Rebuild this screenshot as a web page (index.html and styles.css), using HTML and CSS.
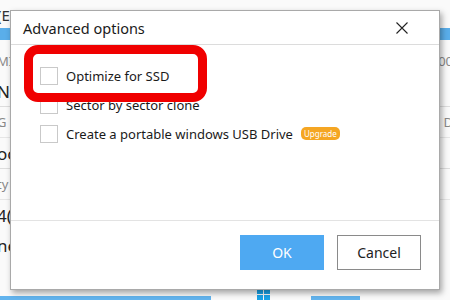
FILE: index.html
```html
<!DOCTYPE html>
<html lang="en">

<head>
    <meta charset="UTF-8">
    <title>Advanced options</title>
    <link rel="stylesheet" href="styles.css">
</head>

<body>
    <!-- app behind the dialog, mostly hidden -->
    <div class="app">
        <div class="row"><span class="left">(E</span><span class="right"></span></div>
        <div class="row sel"><span class="left"></span><span class="right"></span></div>
        <div class="row"><span class="left grey">MI</span><span class="right grey">00</span></div>
        <div class="row"><span class="left big">NI</span><span class="right"></span></div>
        <div class="row line"><span class="left grey">G</span><span class="right grey">D</span></div>
        <div class="row"><span class="left big">oc</span><span class="right"></span></div>
        <div class="row line"><span class="left grey">ty</span><span class="right"></span></div>
        <div class="row"><span class="left big">4(</span><span class="right"></span></div>
        <div class="row"><span class="left big">ne</span><span class="right"></span></div>
    </div>

    <div class="taskbar">
        <div class="task wide"></div>
        <div class="winlogo">
            <span></span><span></span><span></span><span></span>
        </div>
        <div class="task short"></div>
    </div>

    <div class="dialog">
        <div class="dialog-head">
            <span class="dialog-title">Advanced options</span>
            <svg class="close" width="12" height="12" viewBox="0 0 12 12">
                <path d="M0.5 0.5 L11.5 11.5 M11.5 0.5 L0.5 11.5" stroke="#222" stroke-width="1.1" fill="none"/>
            </svg>
        </div>

        <div class="dialog-body">
            <label class="option"><span class="box"></span>Optimize for SSD</label>
            <label class="option"><span class="box"></span>Sector by sector clone</label>
            <label class="option"><span class="box"></span>Create a portable windows USB Drive<span class="badge">Upgrade</span></label>
            <div class="highlight"></div>
        </div>

        <div class="dialog-foot">
            <button class="btn ok">OK</button>
            <button class="btn cancel">Cancel</button>
        </div>
    </div>
</body>

</html>
```

FILE: styles.css
```css
body {
    margin: 0;
    padding: 0;
    width: 450px;
    height: 300px;
    overflow: hidden;
    background-color: #fafafa;
    font-family: "Noto Sans", "Open Sans", sans-serif;
    color: #222;
    position: relative;
}

/* background app */
.row {
    height: 30px;
    display: flex;
    justify-content: space-between;
    align-items: center;
    font-size: 15px;
    color: #333;
}

.row.sel {
    height: 12px;
    background-color: #5aaeea;
    margin-top: -2px;
    margin-bottom: 6px;
}

.row.line {
    border-top: 1px solid #ddd;
    border-bottom: 1px solid #e6e6e6;
}

.left {
    margin-left: -3px;
}

.right {
    margin-right: -3px;
}

.grey {
    color: #888;
    font-size: 13px;
}

.big {
    font-size: 17px;
    color: #222;
}

.taskbar {
    position: absolute;
    left: 0;
    bottom: 0;
    width: 450px;
    height: 10px;
    display: flex;
    align-items: flex-end;
}

.task {
    height: 4px;
    background-color: #63b4ee;
}

.task.wide {
    width: 211px;
}

.task.short {
    width: 49px;
    margin-left: 40px;
}

.winlogo {
    width: 14px;
    height: 11px;
    margin-left: 46px;
    display: grid;
    grid-template-columns: 6px 6px;
    gap: 1px;
}

.winlogo span {
    background-color: #1aa3e8;
}

/* dialog */
.dialog {
    position: absolute;
    left: 10px;
    top: 10px;
    width: 428px;
    height: 278px;
    background-color: #fff;
    border: 1px solid #a9a9a9;
    box-shadow: 2px 3px 6px rgba(0, 0, 0, 0.35);
    display: flex;
    flex-direction: column;
}

.dialog-head {
    height: 33px;
    border-bottom: 1px solid #dcdcdc;
    display: flex;
    align-items: center;
    justify-content: space-between;
    padding: 0 31px 0 12px;
}

.dialog-title {
    font-size: 14.5px;
    color: #1a1a1a;
}

.dialog-body {
    flex: 1;
    position: relative;
    padding: 16px 0 0 29px;
    border-bottom: 1px solid #e3e3e3;
}

.option {
    display: flex;
    align-items: center;
    height: 29px;
    font-size: 13px;
    color: #1a1a1a;
}

.box {
    width: 16px;
    height: 16px;
    border: 1px solid #c9c9c9;
    margin-right: 8px;
}

.badge {
    background-color: #f5a623;
    color: #fff;
    font-size: 8px;
    border-radius: 5px;
    padding: 1px 3px;
    margin-left: 8px;
}

.highlight {
    position: absolute;
    left: 13px;
    top: 0;
    width: 165px;
    height: 39px;
    border: 9px solid #f00000;
    border-radius: 14px;
}

.dialog-foot {
    height: 68px;
    display: flex;
    justify-content: flex-end;
    align-items: flex-start;
    padding: 14px 18px 0 0;
    box-sizing: border-box;
    gap: 13px;
}

.btn {
    width: 84px;
    height: 35px;
    font-family: inherit;
    font-size: 14px;
    border: 1px solid #8a8a8a;
    background-color: #fff;
    color: #222;
    padding: 0;
}

.btn.ok {
    background-color: #4ea9f2;
    border-color: #4ea9f2;
    color: #fff;
}
```
